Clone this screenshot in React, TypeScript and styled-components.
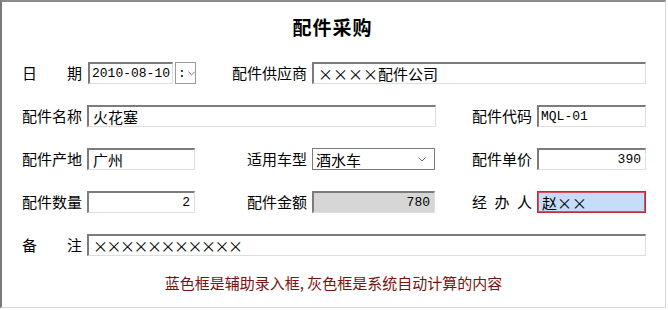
import React from "react";
import styled, { createGlobalStyle } from "styled-components";

const Global = createGlobalStyle`
  html, body { margin: 0; padding: 0; background: #ffffff; }
  body { font-family: "Noto Sans CJK SC", "Liberation Sans", sans-serif; }
  * { box-sizing: border-box; }
`;

const Frame = styled.div`
  width: 666px;
  height: 308px;
  border-top: 2px solid #8c8c8c;
  border-left: 2px solid #7a7a7a;
  border-right: 1px solid #d8d8d8;
  border-bottom: 1px solid #d8d8d8;
  background: #ffffff;
  display: flex;
  flex-direction: column;
`;

const Title = styled.div`
  height: 50px;
  line-height: 50px;
  text-align: center;
  font-size: 19px;
  font-weight: 700;
  color: #000;
  letter-spacing: 1px;
  padding-right: 2px;
`;

const Form = styled.div`
  margin-top: 10px;
  display: flex;
  flex-direction: column;
  gap: 21px;
  padding-left: 20px;
`;

const Row = styled.div`
  display: flex;
  align-items: center;
  height: 22px;
`;

const Field = styled.div<{ $ml?: number; $gap?: number }>`
  display: flex;
  align-items: center;
  margin-left: ${(p) => p.$ml ?? 0}px;
  gap: ${(p) => p.$gap ?? 5}px;
`;

const Label = styled.div<{ $w: number }>`
  width: ${(p) => p.$w}px;
  display: flex;
  justify-content: space-between;
  font-size: 15px;
  line-height: 22px;
  color: #000;
  white-space: nowrap;
`;

const Box = styled.div<{ $w: number; $align?: string; $mono?: boolean; $variant?: string; $pl?: number }>`
  width: ${(p) => p.$w}px;
  height: 22px;
  display: flex;
  align-items: center;
  justify-content: ${(p) => (p.$align === "right" ? "flex-end" : "flex-start")};
  padding: 0 4px 0 ${(p) => p.$pl ?? 4}px;
  border-style: solid;
  border-width: 2px 1px 1px 2px;
  border-color: ${(p) =>
    p.$variant === "active"
      ? "#c02a3a"
      : "#7c7c7c #dedede #dedede #7c7c7c"};
  ${(p) => (p.$variant === "active" ? "border-width: 1px; box-shadow: inset 0 0 0 1px #d85060;" : "")}
  background: ${(p) =>
    p.$variant === "calc" ? "#d6d6d6" : p.$variant === "active" ? "#c4ddf8" : "#ffffff"};
  font-family: ${(p) =>
    p.$mono
      ? '"Liberation Mono", "Noto Sans CJK SC", monospace'
      : '"Noto Sans CJK SC", "Liberation Sans", sans-serif'};
  font-size: ${(p) => (p.$mono ? "13px" : "15px")};
  color: #000;
  white-space: nowrap;
  overflow: hidden;
`;

const Remark = styled.span`
  letter-spacing: -1.5px;
`;

const DropButton = styled.div`
  width: 21px;
  height: 22px;
  border: 1px solid #9a9a9a;
  display: flex;
  align-items: center;
  padding-left: 2px;
  gap: 2px;
  font-size: 13px;
  font-family: "Liberation Mono", monospace;
  color: #000;
`;

const Select = styled.div<{ $w: number }>`
  width: ${(p) => p.$w}px;
  height: 22px;
  border: 1px solid #7a7a7a;
  display: flex;
  align-items: center;
  justify-content: space-between;
  padding: 0 8px 0 3px;
  font-size: 15px;
  color: #000;
`;

const Note = styled.div`
  margin-top: 17px;
  text-align: center;
  font-size: 15px;
  line-height: 20px;
  color: #7a1212;
`;

const Chevron = () => (
  <svg width="8" height="5" viewBox="0 0 8 5">
    <path d="M0.5 0.5 L4 4 L7.5 0.5" fill="none" stroke="#6a6a6a" strokeWidth="1" />
  </svg>
);

const Spread = ({ chars, w }: { chars: string[]; w: number }) => (
  <Label $w={w}>
    {chars.map((c, i) => (
      <span key={i}>{c}</span>
    ))}
  </Label>
);

export default function App() {
  return (
    <>
      <Global />
      <Frame>
        <Title>配件采购</Title>
        <Form>
          <Row>
            <Field $gap={6}>
              <Spread chars={["日", "期"]} w={60} />
              <Box $w={85} $mono $pl={2}>2010-08-10</Box>
            </Field>
            <Field $ml={2}>
              <DropButton>
                <span>:</span>
                <Chevron />
              </DropButton>
            </Field>
            <Field $ml={36} $gap={4}>
              <Label $w={76}>配件供应商</Label>
              <Box $w={334}>××××配件公司</Box>
            </Field>
          </Row>
          <Row>
            <Field>
              <Label $w={60}>配件名称</Label>
              <Box $w={349}>火花塞</Box>
            </Field>
            <Field $ml={36}>
              <Label $w={60}>配件代码</Label>
              <Box $w={109} $mono $pl={2}>MQL-01</Box>
            </Field>
          </Row>
          <Row>
            <Field>
              <Label $w={60}>配件产地</Label>
              <Box $w={108}>广州</Box>
            </Field>
            <Field $ml={52}>
              <Label $w={60}>适用车型</Label>
              <Select $w={123}>
                <span>酒水车</span>
                <Chevron />
              </Select>
            </Field>
            <Field $ml={37}>
              <Label $w={60}>配件单价</Label>
              <Box $w={109} $mono $align="right">390</Box>
            </Field>
          </Row>
          <Row>
            <Field>
              <Label $w={60}>配件数量</Label>
              <Box $w={108} $mono $align="right">2</Box>
            </Field>
            <Field $ml={52}>
              <Label $w={60}>配件金额</Label>
              <Box $w={123} $mono $align="right" $variant="calc">780</Box>
            </Field>
            <Field $ml={37}>
              <Spread chars={["经", "办", "人"]} w={60} />
              <Box $w={109} $variant="active">赵××</Box>
            </Field>
          </Row>
          <Row>
            <Field>
              <Spread chars={["备", "注"]} w={60} />
              <Box $w={559}>
                <Remark>×××××××××××</Remark>
              </Box>
            </Field>
          </Row>
        </Form>
        <Note>蓝色框是辅助录入框, 灰色框是系统自动计算的内容</Note>
      </Frame>
    </>
  );
}
